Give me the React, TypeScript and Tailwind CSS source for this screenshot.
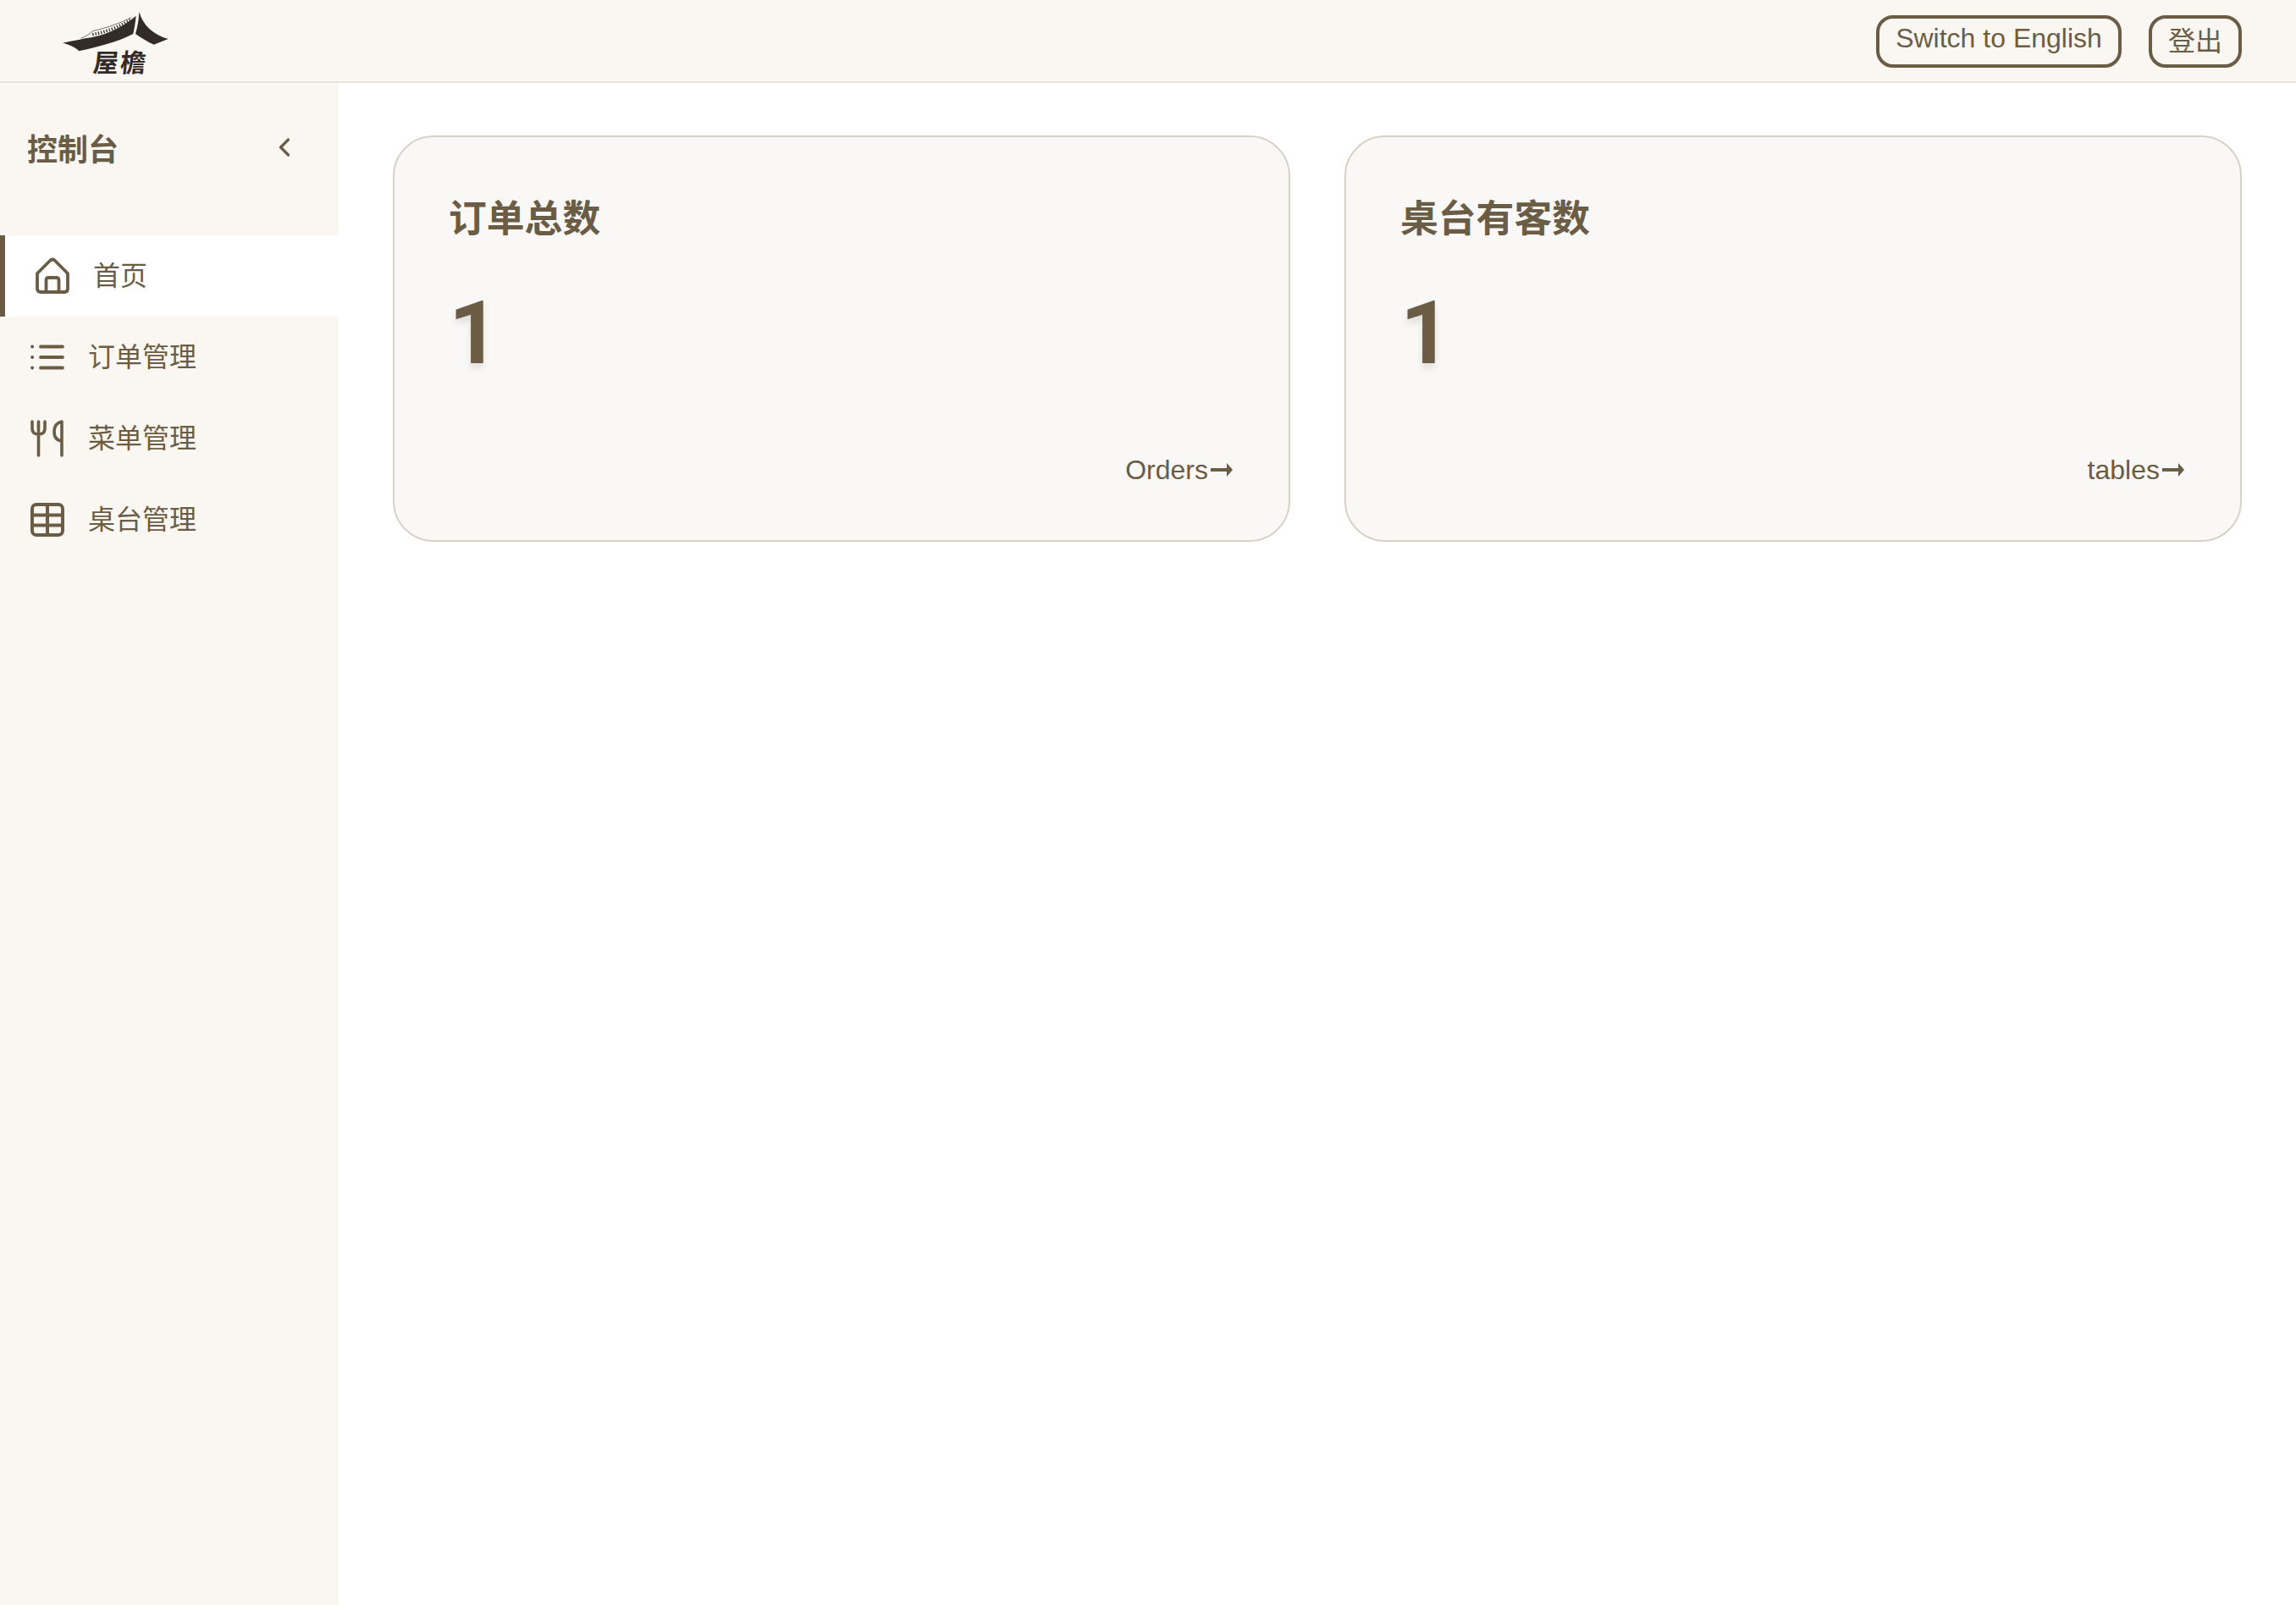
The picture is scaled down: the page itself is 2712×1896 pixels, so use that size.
import { ChevronLeft } from "lucide-react";

const FONT = "font-['Liberation_Sans','Noto_Sans_CJK_SC',sans-serif]";

function LogoMark() {
    return (
        <div className="relative w-[135px] h-[86px] ml-[70px] mt-[10px]">
            <svg viewBox="0 0 405 258" className="w-[135px] h-[86px] block" fill="#332b28">
                <path d="M12 122 C40 116 66 112 92 106 C150 98 215 76 272 26 C270 50 266 70 262 90 C205 120 135 136 70 151 C58 138 36 128 12 122 Z" />
                <path d="M283 12 C296 60 335 94 386 108 L335 128 C312 118 290 104 270 90 C278 64 282 38 283 12 Z" />
                <path d="M118 92 C165 84 215 64 254 40" fill="none" stroke="#332b28" strokeWidth="11" strokeDasharray="4 6" />
                <path d="M76 106 C92 100 106 92 118 80 C165 70 215 52 256 32" fill="none" stroke="#332b28" strokeWidth="2" />
            </svg>
            <div className="absolute left-[40px] top-[48px] flex gap-[2px] -skew-x-6 text-[30px] leading-[34px] font-bold text-[#332b28] whitespace-nowrap">
                <span>屋</span>
                <span>檐</span>
            </div>
        </div>
    );
}

function HomeIcon() {
    return (
        <svg viewBox="0 0 40 44" className="w-[40px] h-[44px] shrink-0" fill="none" stroke="currentColor" strokeWidth="3.8" strokeLinejoin="round" strokeLinecap="round">
            <path d="M2 19 L17.5 3.5 Q20 1.5 22.5 3.5 L38 19 V37 Q38 41 34 41 H6 Q2 41 2 37 Z" />
            <path d="M12.5 41 V27 Q12.5 24 15.5 24 H24.5 Q27.5 24 27.5 27 V41" />
        </svg>
    );
}

function ListIcon() {
    return (
        <svg viewBox="0 0 40 30" className="w-[40px] h-[30px] shrink-0" fill="none" stroke="currentColor" strokeWidth="3.8" strokeLinecap="round">
            <path d="M12 2.5 H38 M12 15 H38 M12 27.5 H38" />
            <path d="M2 2.5 H2.2 M2 15 H2.2 M2 27.5 H2.2" />
        </svg>
    );
}

function CutleryIcon() {
    return (
        <svg viewBox="0 0 40 44" className="w-[40px] h-[44px] shrink-0" fill="none" stroke="currentColor" strokeWidth="3.6" strokeLinecap="round" strokeLinejoin="round">
            <path d="M2 2 V10 Q2 17 9.5 17 Q17 17 17 10 V2 M9.5 2 V42" />
            <path d="M37 42 V2 Q28 4 28 14 Q28 24 37 25" />
        </svg>
    );
}

function TableIcon() {
    return (
        <svg viewBox="0 0 40 40" className="w-[40px] h-[40px] shrink-0" fill="none" stroke="currentColor" strokeWidth="4" strokeLinejoin="round">
            <rect x="2" y="2" width="36" height="36" rx="5" />
            <path d="M2 14.5 H38 M2 26.5 H38 M20 2 V38" />
        </svg>
    );
}

function NavItem({ icon, label, active }: { icon: React.ReactNode; label: string; active?: boolean }) {
    return (
        <div
            className={
                active
                    ? "flex items-center h-[96px] bg-white border-l-[6px] border-[#6b5d45] pl-[36px] gap-[28px]"
                    : "flex items-center h-[96px] pl-[36px] gap-[28px]"
            }
        >
            {icon}
            <span className="text-[32px]">{label}</span>
        </div>
    );
}

function StatCard({ title, link }: { title: string; link: string }) {
    return (
        <div className="h-[480px] rounded-[48px] border-2 border-[#d8d2c4] bg-[#f9f8f6] pl-[64px] pr-[66px] pt-[63px] flex flex-col">
            <h2 className="text-[44.8px] leading-[66px] font-bold">{title}</h2>
            <div className="mt-[43px] font-['Roboto',sans-serif] text-[104px] leading-[120px] font-bold [text-shadow:0_6px_8px_rgba(0,0,0,0.1)]">1</div>
            <div className="mt-[77px] self-end text-[32px] leading-[48px] flex items-center">
                {link}
                <svg viewBox="0 0 26 16" className="w-[26px] h-[16px] ml-[3px]" fill="currentColor">
                    <path d="M0 6 H19 V0 L26 8 L19 16 V10 H0 Z" />
                </svg>
            </div>
        </div>
    );
}

export default function App() {
    return (
        <div className={`${FONT} h-[1896px] overflow-hidden flex flex-col bg-white text-[#6b5d45]`}>
            <header className="h-[98px] shrink-0 flex items-start justify-between bg-[#faf7f2] border-b-2 border-[#e8e5e0] pr-[64px]">
                <LogoMark />
                <div className="flex gap-[32px] pt-[18px]">
                    <button className="h-[62px] w-[290px] rounded-[20px] border-[4px] border-[#6b5d45] text-[32px] leading-[46px] pb-[8px]">
                        Switch to English
                    </button>
                    <button className="h-[62px] w-[110px] rounded-[20px] border-[4px] border-[#6b5d45] text-[32px] leading-[46px]">
                        登出
                    </button>
                </div>
            </header>
            <div className="flex flex-1">
                <aside className="w-[400px] bg-[#faf7f2]">
                    <div className="h-[180px] pt-[55px] pl-[32px] pr-[46px] flex items-start justify-between">
                        <span className="text-[36px] leading-[50px] font-bold">控制台</span>
                        <ChevronLeft size={36} strokeWidth={2.2} className="mt-[3px]" />
                    </div>
                    <nav className="flex flex-col">
                        <NavItem icon={<HomeIcon />} label="首页" active />
                        <NavItem icon={<ListIcon />} label="订单管理" />
                        <NavItem icon={<CutleryIcon />} label="菜单管理" />
                        <NavItem icon={<TableIcon />} label="桌台管理" />
                    </nav>
                </aside>
                <main className="flex-1 px-[64px] pt-[62px]">
                    <div className="grid grid-cols-2 gap-[64px]">
                        <StatCard title="订单总数" link="Orders" />
                        <StatCard title="桌台有客数" link="tables" />
                    </div>
                </main>
            </div>
        </div>
    );
}
